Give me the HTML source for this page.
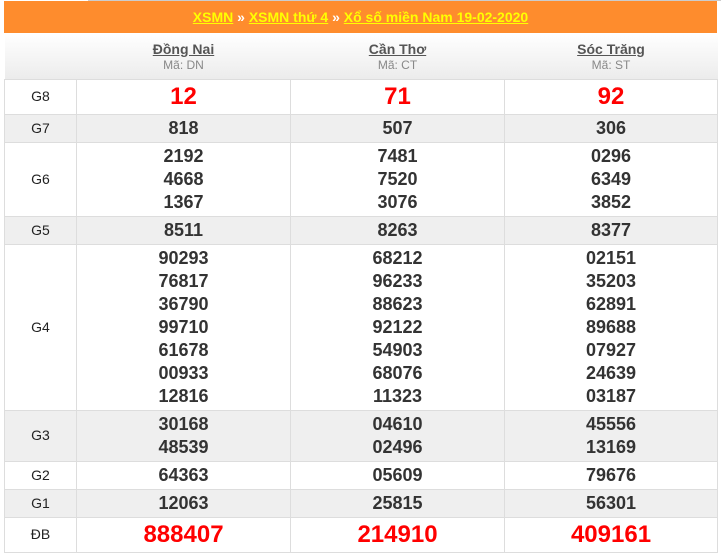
<!DOCTYPE html><html><head><meta charset="utf-8"><style>
body{margin:0;background:#fff;font-family:"Liberation Sans",Arial,sans-serif;width:721px;height:553px;overflow:hidden;position:relative}
.top{position:absolute;left:88px;top:0;width:633px;height:1px;background:#ccc}
.hd{position:absolute;left:4px;top:1px;width:713px;height:32px;background:#fe8c2d;text-align:center;font-weight:bold;font-size:14px;line-height:32px;color:#fff}
.hd a{color:#ff0;text-decoration:underline}
table{position:absolute;left:4px;top:33px;width:713px;border-collapse:collapse;table-layout:fixed}
td{border:1px solid #ddd;text-align:center;padding:0;color:#333;font-weight:bold;font-size:18px;line-height:23px}
td.l{font-weight:normal;font-size:14px;color:#222}
tr.g td{background:#efefef}
th{background:linear-gradient(#fff,#ececec);height:45px;padding:2px 0 0;box-sizing:border-box;font-weight:bold;font-size:14px;color:#555;line-height:16px;border-bottom:1px solid #ddd}
th a{color:#555;text-decoration:underline}
th small{display:block;font-weight:normal;font-size:12px;color:#888}
.r{color:#f00;font-size:24px}
</style></head><body>
<div class="top"></div>
<div class="hd"><a>XSMN</a> » <a>XSMN thứ 4</a> » <a>Xổ số miền Nam 19-02-2020</a></div>
<table>
<colgroup><col style="width:72px"><col style="width:214px"><col style="width:214px"><col style="width:213px"></colgroup>
<tr style="height:46px"><th></th><th><a>Đồng Nai</a><small>Mã: DN</small></th><th><a>Cần Thơ</a><small>Mã: CT</small></th><th><a>Sóc Trăng</a><small>Mã: ST</small></th></tr>
<tr style="height:35px"><td class="l">G8</td><td class="r">12</td><td class="r">71</td><td class="r">92</td></tr>
<tr class="g" style="height:28px"><td class="l">G7</td><td>818</td><td>507</td><td>306</td></tr>
<tr style="height:74px"><td class="l">G6</td><td>2192<br>4668<br>1367</td><td>7481<br>7520<br>3076</td><td>0296<br>6349<br>3852</td></tr>
<tr class="g" style="height:28px"><td class="l">G5</td><td>8511</td><td>8263</td><td>8377</td></tr>
<tr style="height:166px"><td class="l">G4</td><td>90293<br>76817<br>36790<br>99710<br>61678<br>00933<br>12816</td><td>68212<br>96233<br>88623<br>92122<br>54903<br>68076<br>11323</td><td>02151<br>35203<br>62891<br>89688<br>07927<br>24639<br>03187</td></tr>
<tr class="g" style="height:51px"><td class="l">G3</td><td>30168<br>48539</td><td>04610<br>02496</td><td>45556<br>13169</td></tr>
<tr style="height:28px"><td class="l">G2</td><td>64363</td><td>05609</td><td>79676</td></tr>
<tr class="g" style="height:28px"><td class="l">G1</td><td>12063</td><td>25815</td><td>56301</td></tr>
<tr style="height:35px"><td class="l">ĐB</td><td class="r">888407</td><td class="r">214910</td><td class="r">409161</td></tr>
</table>
</body></html>
